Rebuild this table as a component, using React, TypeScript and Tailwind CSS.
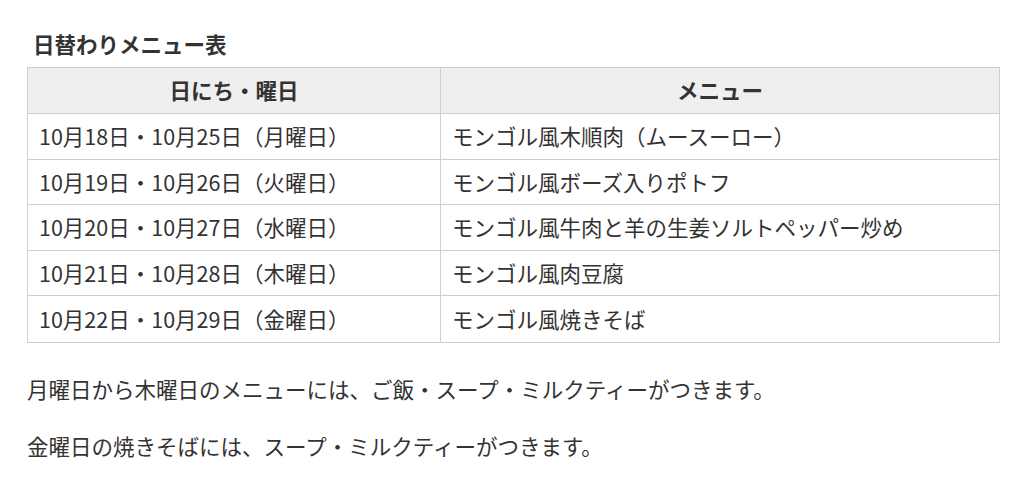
const rows = [
  ["10月18日・10月25日（月曜日）", "モンゴル風木順肉（ムースーロー）"],
  ["10月19日・10月26日（火曜日）", "モンゴル風ボーズ入りポトフ"],
  ["10月20日・10月27日（水曜日）", "モンゴル風牛肉と羊の生姜ソルトペッパー炒め"],
  ["10月21日・10月28日（木曜日）", "モンゴル風肉豆腐"],
  ["10月22日・10月29日（金曜日）", "モンゴル風焼きそば"],
];

export default function App() {
  return (
    <div
      className="min-h-screen bg-white pl-[27px] pr-[24px] pt-[29px] text-[#333] text-[21.5px]"
      style={{ fontFamily: '"Noto Sans CJK JP", "Noto Sans", sans-serif' }}
    >
      <h2 className="font-bold leading-[30px] pl-[6px]">日替わりメニュー表</h2>

      {/* メニュー表 */}
      <div className="mt-[8px] border border-[#cfcfcf]">
        <div className="grid grid-cols-[413px_1fr] h-[46px] bg-[#efefef] border-b border-[#cfcfcf] font-bold">
          <div className="flex items-center justify-center border-r border-[#cfcfcf]">日にち・曜日</div>
          <div className="flex items-center justify-center">メニュー</div>
        </div>
        {rows.map(([day, menu], i) => (
          <div
            key={day}
            className={`grid grid-cols-[413px_1fr] h-[45.6px] ${i < rows.length - 1 ? "border-b border-[#cfcfcf]" : ""}`}
          >
            <div className="flex items-center pl-[11px] border-r border-[#cfcfcf]">{day}</div>
            <div className="flex items-center pl-[11px]">{menu}</div>
          </div>
        ))}
      </div>

      <p className="mt-[30px] leading-[32px]">月曜日から木曜日のメニューには、ご飯・スープ・ミルクティーがつきます。</p>
      <p className="mt-[25px] leading-[32px]">金曜日の焼きそばには、スープ・ミルクティーがつきます。</p>
    </div>
  );
}
